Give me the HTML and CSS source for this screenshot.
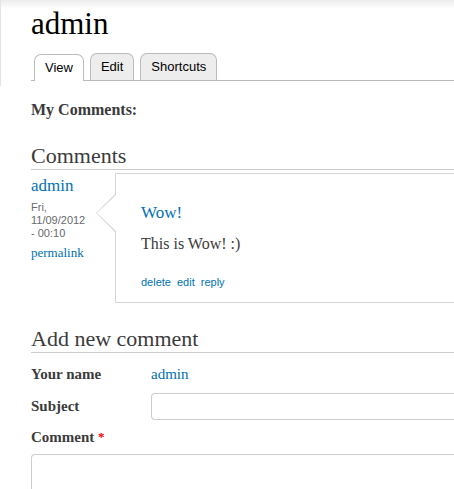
FILE: index.html
```html
<!DOCTYPE html>
<html>
<head>
<meta charset="utf-8">
<link rel="stylesheet" href="styles.css">
</head>
<body>
<div class="head">
  <h1 class="title">admin</h1>
  <ul class="tabs">
    <li><a class="tab active">View</a></li>
    <li><a class="tab">Edit</a></li>
    <li><a class="tab">Shortcuts</a></li>
  </ul>
</div>
<div class="content">
  <p class="mine">My Comments:</p>
  <h2 class="section">Comments</h2>
  <div class="comment">
    <div class="attribution">
      <a class="author">admin</a>
      <div class="date">Fri,<br>11/09/2012<br>- 00:10</div>
      <a class="permalink">permalink</a>
    </div>
    <div class="bubble">
      <h3 class="ctitle">Wow!</h3>
      <p class="body">This is Wow! :)</p>
      <div class="links"><a>delete</a><a>edit</a><a>reply</a></div>
    </div>
  </div>
  <h2 class="section add">Add new comment</h2>
  <div class="row name"><span class="label">Your name</span><a class="val">admin</a></div>
  <div class="row subj"><span class="label">Subject</span><div class="input"></div></div>
  <div class="clabel">Comment <span class="req">*</span></div>
  <div class="textarea"></div>
</div>
</body>
</html>
```
FILE: styles.css
```css
html, body { margin: 0; padding: 0; }
body {
  background: linear-gradient(#ececec, #ffffff 9px) no-repeat;
  color: #3b3b3b;
  font-family: "Liberation Serif", serif;
  overflow: hidden;
  height: 489px;
}
a { color: #0071b3; text-decoration: none; }
.head {
  border-left: 1px solid #e4e4e4;
  padding: 6px 0 5px 30px;
}
.title {
  margin: 0;
  font-weight: normal;
  font-size: 31px;
  line-height: 36px;
  color: #000;
}
.tabs {
  list-style: none;
  margin: 11px 0 0 0;
  padding: 0 0 0 3px;
  display: flex;
  gap: 6px;
  border-bottom: 1px solid #bbb;
}
.tab {
  display: block;
  font-family: "Liberation Sans", sans-serif;
  font-size: 13px;
  color: #000;
  height: 26px;
  line-height: 26px;
  padding: 0 10px;
  border: 1px solid #bbb;
  border-bottom: none;
  border-radius: 7px 7px 0 0;
  background: #ededed;
}
.tab.active { background: #fff; position: relative; top: 1px; height: 26px; }
.content { padding-left: 31px; }
.mine {
  margin: 15px 0 0 0;
  font-weight: bold;
  font-size: 16px;
  line-height: 18px;
}
.section {
  margin: 24px 0 0 0;
  font-weight: normal;
  font-size: 22px;
  line-height: 26px;
  border-bottom: 1px solid #ccc;
  padding-bottom: 0;
}
.comment { display: flex; margin-top: 3px; }
.attribution { width: 84px; flex: none; padding-top: 4px; }
.author { display: block; font-size: 17px; line-height: 18px; }
.date {
  font-family: "Liberation Sans", sans-serif;
  font-size: 11px;
  line-height: 13px;
  color: #68696b;
  margin-top: 6px;
}
.permalink { display: block; font-size: 13px; line-height: 16px; margin-top: 5px; }
.bubble {
  position: relative;
  flex: 1;
  border: 1px solid #d3d7d9;
  border-right: none;
  height: 128px;
  padding: 0 0 0 25px;
}
.bubble::before {
  content: "";
  position: absolute;
  left: -20px;
  top: 19px;
  width: 0; height: 0;
  border-top: 20px solid transparent;
  border-bottom: 20px solid transparent;
  border-right: 20px solid #d3d7d9;
}
.bubble::after {
  content: "";
  position: absolute;
  left: -19px;
  top: 20px;
  width: 0; height: 0;
  border-top: 19px solid transparent;
  border-bottom: 19px solid transparent;
  border-right: 20px solid #fff;
}
.ctitle {
  margin: 29px 0 0 0;
  font-weight: normal;
  font-size: 17px;
  line-height: 20px;
  color: #0071b3;
}
.body { margin: 11px 0 0 0; font-size: 16px; line-height: 20px; }
.links {
  margin-top: 22px;
  font-family: "Liberation Sans", sans-serif;
  font-size: 11px;
  display: flex;
  gap: 6px;
}
.add { margin-top: 23px; }
.row { display: flex; align-items: center; }
.label { width: 120px; font-weight: bold; font-size: 15px; flex: none; }
.name { margin-top: 13px; }
.val { font-size: 15px; }
.subj { margin-top: 10px; }
.input {
  flex: 1;
  height: 25px;
  border: 1px solid #ccc;
  border-right: none;
  border-radius: 4px 0 0 4px;
}
.clabel { margin-top: 8px; font-weight: bold; font-size: 15px; line-height: 18px; }
.req { color: #e00; font-size: 13px; vertical-align: top; }
.textarea {
  margin-top: 8px;
  height: 60px;
  border: 1px solid #ccc;
  border-right: none;
  border-radius: 4px 0 0 0;
}
```
